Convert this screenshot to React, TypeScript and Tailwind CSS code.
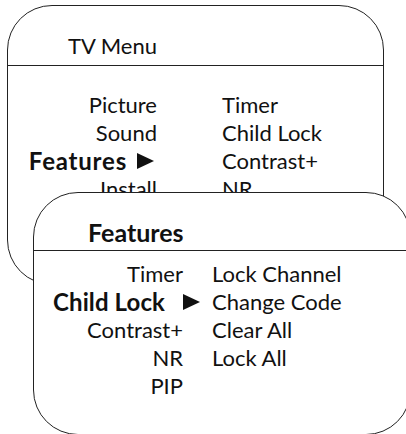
import React from 'react'

const Arrow = ({ className = '' }: { className?: string }) => (
  <svg viewBox="0 0 17 16" className={`inline-block w-[17px] h-[16px] shrink-0 ${className}`}>
    <polygon points="0,0 17,8 0,16" fill="#111" />
  </svg>
)

export default function App() {
  return (
    <div className="relative w-[406px] h-[434px] overflow-hidden bg-white text-[#111]" style={{ fontFamily: 'Lato, "Open Sans", sans-serif' }}>
      {/* TV Menu */}
      <div className="ml-[7px] mt-[5px] w-[377px] h-[280px] border border-[#222] rounded-[45px]">
        <div className="h-[60px] border-b border-[#222] pl-[60px] pt-[26px] text-[22px] leading-[28px]">TV Menu</div>
        <div className="pt-[25px] grid grid-cols-[149px_1fr] gap-x-[65px] text-[22px] leading-[28px]">
          <span className="text-right">Picture</span>
          <span>Timer</span>
          <span className="text-right">Sound</span>
          <span>Child Lock</span>
          <span className="font-bold text-[24px] tracking-[0.8px] flex items-center justify-end">
            Features
            <Arrow className="ml-[10px] mr-[3px]" />
          </span>
          <span>Contrast+</span>
          <span className="text-right">Install</span>
          <span>NR</span>
        </div>
      </div>

      {/* Features submenu */}
      <div className="relative z-10 ml-[33px] -mt-[93px] w-[378px] h-[243px] border border-[#222] rounded-[45px] bg-white">
        <div className="h-[58px] border-b border-[#222] pl-[54px] pt-[25px] text-[25px] leading-[28px] font-bold">Features</div>
        <div className="pt-[9px] grid grid-cols-[149px_1fr] gap-x-[29px] text-[22px] leading-[28px]">
          <span className="text-right">Timer</span>
          <span>Lock Channel</span>
          <span className="font-bold text-[24px] tracking-[0.1px] flex items-center justify-end">
            Child Lock
            <Arrow className="ml-[18px] -mr-[17px]" />
          </span>
          <span>Change Code</span>
          <span className="text-right">Contrast+</span>
          <span>Clear All</span>
          <span className="text-right">NR</span>
          <span>Lock All</span>
          <span className="text-right">PIP</span>
          <span></span>
        </div>
      </div>
    </div>
  )
}
